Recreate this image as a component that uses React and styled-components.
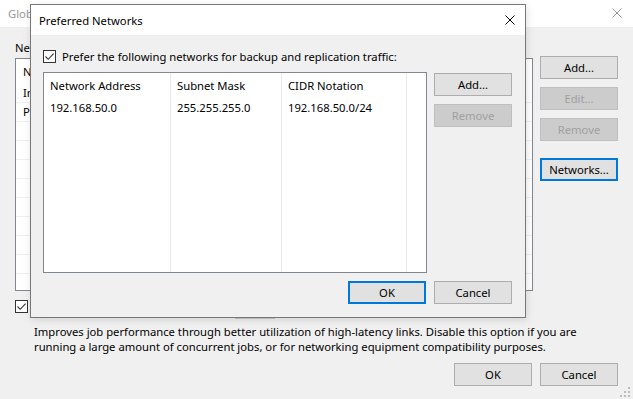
import React from "react";
import styled, { createGlobalStyle, css } from "styled-components";

const GlobalStyle = createGlobalStyle`
  html, body {
    margin: 0;
    padding: 0;
    background: #f0f0f0;
  }
  body {
    font-family: "Noto Sans", "Segoe UI", sans-serif;
    font-size: 11.25px;
    color: #000;
  }
  * { box-sizing: border-box; }
`;

const CloseIcon = ({ color }) => (
  <svg width="10" height="10" viewBox="0 0 10 10">
    <path d="M0.5 0.5 L9.5 9.5 M9.5 0.5 L0.5 9.5" stroke={color} strokeWidth="1" fill="none" />
  </svg>
);

const Check = () => (
  <svg width="11" height="11" viewBox="0 0 11 11">
    <path d="M1.5 5.5 L4.2 8.3 L9.6 2.6" stroke="#333" strokeWidth="1.1" fill="none" />
  </svg>
);

function Checkbox() {
  return (
    <CheckBox>
      <Check />
    </CheckBox>
  );
}

export default function App() {
  const bgRows = ["Internet", "Preferred networks", "", "", "", "", "", "", "", "", ""];
  return (
    <>
      <GlobalStyle />
      <Window>
        <TitleBar>
          <Title inactive>Global Network Traffic Rules</Title>
          <CloseBox right={11}>
            <CloseIcon color="#999" />
          </CloseBox>
        </TitleBar>
        <Body>
          <Label>Network traffic rules:</Label>
          <MainRow>
            <ListBox>
              <BgHeader>Name</BgHeader>
              {bgRows.map((r, i) => (
                <BgRow key={i}>{r}</BgRow>
              ))}
            </ListBox>
            <ButtonColumn>
              <Button>Add...</Button>
              <Button disabled>Edit...</Button>
              <Button disabled>Remove</Button>
              <Button focused spaced>Networks...</Button>
            </ButtonColumn>
          </MainRow>
          <StreamRow>
            <Checkbox />
            <StreamLabel>Use multiple upload streams per job:</StreamLabel>
            <SpinBox>5</SpinBox>
            <StreamLabel>streams</StreamLabel>
          </StreamRow>
          <Description>
            Improves job performance through better utilization of high-latency links. Disable this option if you are
            running a large amount of concurrent jobs, or for networking equipment compatibility purposes.
          </Description>
          <Footer>
            <Button>OK</Button>
            <Button>Cancel</Button>
          </Footer>
        </Body>
        <Grip>
          <svg width="10" height="10" viewBox="0 0 10 10">
            <rect x="8" y="0" width="2" height="2" fill="#bcbcbc" />
            <rect x="4" y="4" width="2" height="2" fill="#bcbcbc" />
            <rect x="8" y="4" width="2" height="2" fill="#bcbcbc" />
            <rect x="0" y="8" width="2" height="2" fill="#bcbcbc" />
            <rect x="4" y="8" width="2" height="2" fill="#bcbcbc" />
            <rect x="8" y="8" width="2" height="2" fill="#bcbcbc" />
          </svg>
        </Grip>

        <Dialog>
          <DialogTitleBar>
            <Title>Preferred Networks</Title>
            <CloseBox right={10}>
              <CloseIcon color="#000" />
            </CloseBox>
          </DialogTitleBar>
          <DialogBody>
            <CheckRow>
              <Checkbox />
              <span>Prefer the following networks for backup and replication traffic:</span>
            </CheckRow>
            <DialogMain>
              <NetList>
                <Columns>
                  <Column width={127}>
                    <HeadCell>Network Address</HeadCell>
                    <Cell>192.168.50.0</Cell>
                  </Column>
                  <Column width={111}>
                    <HeadCell>Subnet Mask</HeadCell>
                    <Cell>255.255.255.0</Cell>
                  </Column>
                  <Column width={125}>
                    <HeadCell>CIDR Notation</HeadCell>
                    <Cell>192.168.50.0/24</Cell>
                  </Column>
                </Columns>
              </NetList>
              <DialogButtons>
                <Button>Add...</Button>
                <Button disabled>Remove</Button>
              </DialogButtons>
            </DialogMain>
            <Footer dialog>
              <Button focused>OK</Button>
              <Button>Cancel</Button>
            </Footer>
          </DialogBody>
        </Dialog>
      </Window>
    </>
  );
}

const Window = styled.div`
  position: relative;
  width: 633px;
  height: 399px;
  overflow: hidden;
  background: #f0f0f0;
  display: flex;
  flex-direction: column;
`;

const TitleBar = styled.div`
  flex: none;
  height: 27px;
  background: #fff;
  display: flex;
  align-items: center;
  padding-left: 8px;
`;

const Title = styled.div`
  flex: 1;
  color: ${(p) => (p.inactive ? "#999" : "#000")};
  white-space: nowrap;
`;

const CloseBox = styled.div`
  display: flex;
  padding-right: ${(p) => p.right}px;
  margin-top: ${(p) => (p.right === 10 ? 0 : -2)}px;
`;

const Body = styled.div`
  flex: 1;
  display: flex;
  flex-direction: column;
  padding: 13px 15px 0 15px;
`;

const Label = styled.div`
  height: 15px;
  line-height: 15px;
  white-space: nowrap;
`;

const MainRow = styled.div`
  display: flex;
  gap: 7px;
  margin-top: 3px;
`;

const ListBox = styled.div`
  flex: 1;
  height: 233px;
  border: 1px solid #828790;
  background: #fff;
  overflow: hidden;
`;

const BgHeader = styled.div`
  height: 25px;
  line-height: 25px;
  padding-left: 7px;
`;

const BgRow = styled.div`
  height: 19px;
  line-height: 18px;
  padding-left: 7px;
  border-bottom: 1px solid #f0f0f0;
  white-space: nowrap;
`;

const ButtonColumn = styled.div`
  flex: none;
  display: flex;
  flex-direction: column;
  gap: 8px;
  margin-top: -2px;
`;

const Button = styled.button`
  flex: none;
  width: 78px;
  height: 23px;
  padding: 0;
  font: inherit;
  color: ${(p) => (p.disabled ? "#a0a0a0" : "#000")};
  background: ${(p) => (p.disabled ? "#cccccc" : "#e1e1e1")};
  border: 1px solid ${(p) => (p.disabled ? "#bfbfbf" : "#adadad")};
  ${(p) =>
    p.focused &&
    css`
      border: 2px solid #0078d7;
    `}
  ${(p) =>
    p.spaced &&
    css`
      margin-top: 9px;
    `}
`;

const CheckBox = styled.span`
  flex: none;
  display: inline-flex;
  align-items: center;
  justify-content: center;
  width: 13px;
  height: 13px;
  border: 1px solid #333;
  background: #fff;
`;

const StreamRow = styled.div`
  display: flex;
  align-items: flex-start;
  height: 21px;
  margin-top: 7px;
  & > ${CheckBox} {
    margin-top: 2px;
  }
`;

const StreamLabel = styled.span`
  margin: 2px 6px 0 6px;
  line-height: 15px;
  white-space: nowrap;
`;

const SpinBox = styled.div`
  width: 40px;
  height: 21px;
  border: 1px solid #c8c8c8;
  background: #fff;
  padding: 2px 4px;
`;

const Description = styled.div`
  margin: 5px 0 0 19px;
  line-height: 15px;
`;

const Footer = styled.div`
  display: flex;
  justify-content: flex-end;
  gap: 8px;
  margin-top: ${(p) => (p.dialog ? 8 : 9)}px;
`;

const Grip = styled.div`
  position: absolute;
  right: 3px;
  bottom: 2px;
  display: flex;
`;

const Dialog = styled.div`
  position: absolute;
  left: 30px;
  top: 4px;
  width: 496px;
  height: 314px;
  border: 1px solid #777;
  background: #f0f0f0;
  display: flex;
  flex-direction: column;
  box-shadow: 1px 2px 8px rgba(0, 0, 0, 0.12);
`;

const DialogTitleBar = styled.div`
  flex: none;
  height: 30px;
  background: #fff;
  display: flex;
  align-items: center;
  padding-left: 8px;
`;

const DialogBody = styled.div`
  flex: 1;
  display: flex;
  flex-direction: column;
  padding: 13px 13px 13px 12px;
`;

const CheckRow = styled.label`
  display: flex;
  align-items: center;
  gap: 6px;
  height: 16px;
  white-space: nowrap;
`;

const DialogMain = styled.div`
  flex: 1;
  display: flex;
  gap: 7px;
  margin-top: 8px;
`;

const NetList = styled.div`
  flex: 1;
  border: 1px solid #828790;
  background: #fff;
  display: flex;
`;

const Columns = styled.div`
  display: flex;
`;

const Column = styled.div`
  width: ${(p) => p.width}px;
  border-right: 1px solid #e8e8e8;
  display: flex;
  flex-direction: column;
`;

const HeadCell = styled.div`
  height: 25px;
  line-height: 25px;
  padding-left: 6px;
  white-space: nowrap;
`;

const Cell = styled.div`
  height: 19px;
  line-height: 19px;
  padding-left: 6px;
  white-space: nowrap;
`;

const DialogButtons = styled.div`
  flex: none;
  display: flex;
  flex-direction: column;
  gap: 8px;
  margin-top: 1px;
`;
